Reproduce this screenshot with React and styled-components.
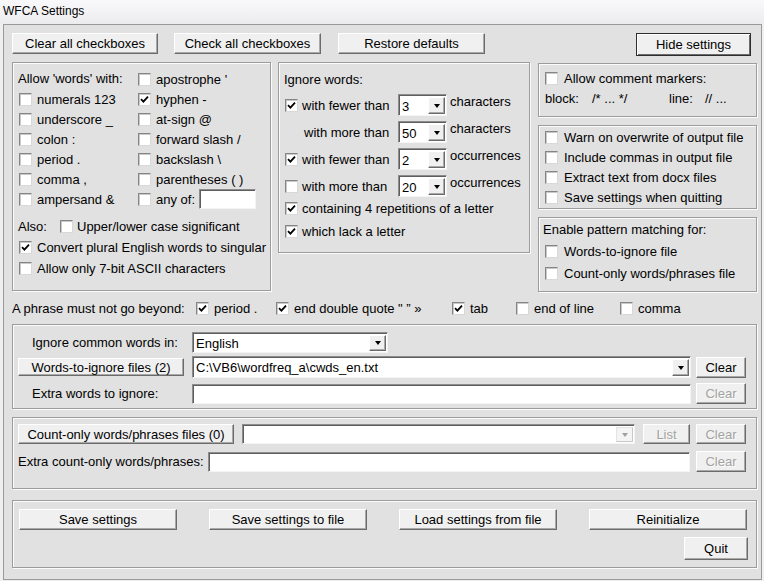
import React from "react";
import styled, { createGlobalStyle } from "styled-components";

const GlobalStyle = createGlobalStyle`
  html, body {
    margin: 0;
    padding: 0;
    background: #eeeef0;
  }
  body {
    font-family: "Liberation Sans", Arial, sans-serif;
    font-size: 13px;
    color: #000;
  }
  * {
    box-sizing: border-box;
  }
`;

const Window = styled.div`
  width: 764px;
  height: 581px;
  display: flex;
  flex-direction: column;
  background: #efeff1;
`;

const TitleBar = styled.div`
  height: 24px;
  padding: 4px 0 0 3px;
  font-size: 12px;
  line-height: 15px;
  background: linear-gradient(#f9f9fb, #ececef);
`;

const Frame = styled.div`
  margin: 0 2px 1px 3px;
  height: 556px;
  border: 1px solid #9a9a9a;
  background: #e1e1e1;
  padding: 8px 4px 0 8px;
  display: flex;
  flex-direction: column;
`;

const TopRow = styled.div`
  display: flex;
  align-items: flex-start;
  height: 23px;
  margin-bottom: 6px;
`;

const Button = styled.button`
  width: ${(p) => p.$w}px;
  height: ${(p) => p.$h || 21}px;
  margin-left: ${(p) => (p.$ml === "auto" ? "auto" : `${p.$ml || 0}px`)};
  margin-right: ${(p) => p.$mr || 0}px;
  flex: none;
  padding: 0;
  font-family: inherit;
  font-size: 13px;
  color: ${(p) => (p.disabled ? "#a3a3a3" : "#000")};
  text-shadow: ${(p) => (p.disabled ? "1px 1px 0 #fafafa" : "none")};
  background: #f0f0f0;
  border-style: solid;
  border-width: 1px;
  border-color: ${(p) =>
    p.$default ? "#2e2e2e" : "#ffffff #6b6b6b #6b6b6b #ffffff"};
  box-shadow: ${(p) =>
    p.$default
      ? "inset 1px 1px 0 #ffffff, inset -1px -1px 0 #6b6b6b"
      : "inset -1px -1px 0 #a9a9a9"};
  cursor: default;
`;

const Main = styled.div`
  display: flex;
  align-items: flex-start;
`;

const Group = styled.div`
  width: ${(p) => p.$w}px;
  height: ${(p) => p.$h}px;
  margin-top: ${(p) => p.$mt || 0}px;
  margin-left: ${(p) => p.$ml || 0}px;
  padding: ${(p) => p.$pad || "0"};
  border: 1px solid #9c9c9c;
  box-shadow: inset 1px 1px 0 #fbfbfb, 1px 1px 0 #fbfbfb;
  flex: none;
`;

const Column = styled.div`
  display: flex;
  flex-direction: column;
  margin-left: ${(p) => p.$ml || 0}px;
`;

const CharGrid = styled.div`
  display: grid;
  grid-template-columns: 119px 1fr;
  grid-auto-rows: 20px;
`;

const Text = styled.span`
  display: inline-flex;
  align-items: center;
  width: ${(p) => (p.$w ? `${p.$w}px` : "auto")};
  margin-left: ${(p) => p.$ml || 0}px;
  padding-left: ${(p) => p.$pl || 0}px;
  white-space: nowrap;
  flex: none;
`;

const Heading = styled.div`
  line-height: 16px;
  margin-left: ${(p) => p.$ml || 0}px;
  margin-bottom: ${(p) => p.$mb || 0}px;
  white-space: nowrap;
`;

const Row = styled.div`
  display: flex;
  align-items: center;
  height: ${(p) => p.$h || 20}px;
  margin-top: ${(p) => p.$mt || 0}px;
  white-space: nowrap;
`;

const CheckLabel = styled.label`
  display: flex;
  align-items: center;
  gap: ${(p) => p.$gap || 5}px;
  height: ${(p) => p.$h || 20}px;
  width: ${(p) => (p.$w ? `${p.$w}px` : "auto")};
  margin-left: ${(p) => p.$ml || 0}px;
  margin-top: ${(p) => p.$mt || 0}px;
  white-space: nowrap;
  flex: none;
`;

const Box = styled.span`
  width: 13px;
  height: 13px;
  flex: none;
  background: #fff;
  border: 1px solid;
  border-color: #858585 #d8d8d8 #d8d8d8 #858585;
  box-shadow: inset 1px 1px 0 #c9c9c9;
  display: flex;
  align-items: center;
  justify-content: center;
`;

const Check = ({ on, children, ...rest }) => (
  <CheckLabel {...rest}>
    <Box>
      {on && (
        <svg width="9" height="9" viewBox="0 0 9 9">
          <path d="M1 4.2 L3.4 6.6 L8 1.6" fill="none" stroke="#000" strokeWidth="1.8" />
        </svg>
      )}
    </Box>
    {children != null && <span>{children}</span>}
  </CheckLabel>
);

const Field = styled.div`
  width: ${(p) => p.$w}px;
  height: ${(p) => p.$h || 20}px;
  margin-left: ${(p) => p.$ml || 0}px;
  flex: none;
  display: flex;
  align-items: center;
  justify-content: space-between;
  padding-left: 3px;
  background: #fff;
  border: 1px solid;
  border-color: #8c8c8c #f4f4f4 #f4f4f4 #8c8c8c;
  box-shadow: inset 1px 1px 0 #5e5e5e;
  white-space: nowrap;
  overflow: hidden;
`;

const FieldText = styled.span`
  padding-top: ${(p) => p.$pt || 0}px;
`;

const DropButton = styled.span`
  width: 17px;
  align-self: stretch;
  margin: 2px 1px 1px 0;
  flex: none;
  display: flex;
  align-items: center;
  justify-content: center;
  background: ${(p) => (p.$off ? "#f4f4f4" : "#f0f0f0")};
  border: 1px solid;
  border-color: ${(p) =>
    p.$off ? "#e4e4e4 #c8c8c8 #c8c8c8 #e4e4e4" : "#ffffff #6b6b6b #6b6b6b #ffffff"};
  box-shadow: ${(p) => (p.$off ? "none" : "inset -1px -1px 0 #a9a9a9")};

  &::after {
    content: "";
    border-left: 3.5px solid transparent;
    border-right: 3.5px solid transparent;
    border-top: 4px solid ${(p) => (p.$off ? "#a0a0a0" : "#000")};
  }
`;

const Combo = ({ value, off, pt, ...rest }) => (
  <Field {...rest}>
    <FieldText $pt={pt}>{value}</FieldText>
    <DropButton $off={off} />
  </Field>
);

const SizeRow = styled.div`
  display: flex;
  align-items: flex-start;
  height: 22px;
  margin-bottom: 5px;
`;

const LabelCell = styled.div`
  width: 113px;
  height: 22px;
  display: flex;
  align-items: center;
  padding-left: ${(p) => p.$pl || 0}px;
  flex: none;
`;

const Unit = styled.span`
  margin-left: 3px;
  line-height: 16px;
`;

const FileRow = styled.div`
  display: flex;
  align-items: center;
  height: ${(p) => p.$h}px;
  margin-top: ${(p) => p.$mt || 0}px;
`;

const Cell = styled.div`
  width: ${(p) => p.$w}px;
  flex: none;
  display: flex;
  align-items: center;
  padding-left: ${(p) => p.$pl || 0}px;
  white-space: nowrap;
`;

const ButtonBar = styled.div`
  display: flex;
  gap: 32px;
`;

const QuitRow = styled.div`
  display: flex;
  justify-content: flex-end;
  margin-top: 7px;
`;

const sizes = [
  { on: true, label: "with fewer than", value: "3", unit: "characters" },
  { on: null, label: "with more than", value: "50", unit: "characters" },
  { on: true, label: "with fewer than", value: "2", unit: "occurrences" },
  { on: false, label: "with more than", value: "20", unit: "occurrences" },
];

const phraseStops = [
  { label: "period .", on: true, w: 80 },
  { label: "end double quote \" \u201D \u00BB", on: true, w: 176 },
  { label: "tab", on: true, w: 64 },
  { label: "end of line", on: false, w: 104 },
  { label: "comma", on: false },
];

export default function App() {
  return (
    <Window>
      <GlobalStyle />
      <TitleBar>WFCA Settings</TitleBar>
      <Frame>
        <TopRow>
          <Button $w={146}>Clear all checkboxes</Button>
          <Button $w={147} $ml={16}>Check all checkboxes</Button>
          <Button $w={147} $ml={17}>Restore defaults</Button>
          <Button $w={115} $h={23} $ml="auto" $mr={6} $default>
            Hide settings
          </Button>
        </TopRow>

        <Main>
          <Group $w={259} $h={229} $pad="6px 0 0 6px">
            <CharGrid>
              <Heading $ml={-1} style={{ lineHeight: "20px" }}>Allow 'words' with:</Heading>
              <Check>apostrophe '</Check>
              <Check>numerals 123</Check>
              <Check on>hyphen -</Check>
              <Check>underscore _</Check>
              <Check>at-sign @</Check>
              <Check>colon :</Check>
              <Check>forward slash /</Check>
              <Check>period .</Check>
              <Check>backslash \</Check>
              <Check>comma ,</Check>
              <Check>parentheses ( )</Check>
              <Check>ampersand &amp;</Check>
              <Row>
                <Check>any of:</Check>
                <Field $w={57} $h={20} $ml={4} />
              </Row>
            </CharGrid>
            <Row $mt={7}>
              <Text $w={42} $ml={-1}>Also:</Text>
              <Check $gap={4}>Upper/lower case significant</Check>
            </Row>
            <Check on $mt={1}>Convert plural English words to singular</Check>
            <Check $mt={1}>Allow only 7-bit ASCII characters</Check>
          </Group>

          <Group $w={252} $h={191} $ml={7} $pad="9px 0 0 6px">
            <Heading $ml={-1} $mb={6}>Ignore words:</Heading>
            {sizes.map((s, i) => (
              <SizeRow key={i}>
                <LabelCell $pl={s.on === null ? 19 : 0}>
                  {s.on === null ? s.label : <Check on={s.on} $gap={4}>{s.label}</Check>}
                </LabelCell>
                <Combo $w={49} $h={22} value={s.value} pt={2} />
                <Unit>{s.unit}</Unit>
              </SizeRow>
            ))}
            <Check on $gap={4} $h={23} $mt={-5}>containing 4 repetitions of a letter</Check>
            <Check on $gap={4} $h={23}>which lack a letter</Check>
          </Group>

          <Column $ml={8}>
            <Group $w={219} $h={54} $mt={1} $pad="4px 0 0 6px">
              <Check $gap={6}>Allow comment markers:</Check>
              <Row>
                <Text $w={47}>block:</Text>
                <Text $w={77}>/* ... */</Text>
                <Text $w={36}>line:</Text>
                <Text>// ...</Text>
              </Row>
            </Group>
            <Group $w={219} $h={84} $mt={8} $pad="1px 0 0 6px">
              <Check $gap={6}>Warn on overwrite of output file</Check>
              <Check $gap={6}>Include commas in output file</Check>
              <Check $gap={6}>Extract text from docx files</Check>
              <Check $gap={6}>Save settings when quitting</Check>
            </Group>
            <Group $w={219} $h={75} $mt={8} $pad="4px 0 0 6px">
              <Heading $ml={-2} $mb={3}>Enable pattern matching for:</Heading>
              <Check $gap={6} $h={21}>Words-to-ignore file</Check>
              <Check $gap={6} $h={21} $mt={1}>Count-only words/phrases file</Check>
            </Group>
          </Column>
        </Main>

        <Row $mt={6} $h={20}>
          <Text $w={184}>A phrase must not go beyond:</Text>
          {phraseStops.map((p) => (
            <Check key={p.label} on={p.on} $w={p.w}>
              {p.label}
            </Check>
          ))}
        </Row>

        <Group $w={745} $h={85} $mt={6} $pad="7px 0 0 5px">
          <FileRow $h={21}>
            <Cell $w={174} $pl={14}>Ignore common words in:</Cell>
            <Combo $w={196} $h={21} value="English" pt={1} />
          </FileRow>
          <FileRow $h={22} $mt={3}>
            <Cell $w={174}>
              <Button $w={166} $h={18}>Words-to-ignore files (2)</Button>
            </Cell>
            <Combo $w={499} $h={22} value="C:\VB6\wordfreq_a\cwds_en.txt" />
            <Button $w={50} $ml={5}>Clear</Button>
          </FileRow>
          <FileRow $h={21} $mt={5}>
            <Cell $w={174} $pl={14}>Extra words to ignore:</Cell>
            <Field $w={499} $h={20} />
            <Button $w={50} $ml={5} disabled>Clear</Button>
          </FileRow>
        </Group>

        <Group $w={745} $h={72} $mt={8} $pad="6px 0 0 5px">
          <FileRow $h={20}>
            <Button $w={216} $h={20}>Count-only words/phrases files (0)</Button>
            <Combo $w={393} $h={20} $ml={8} value="" off />
            <Button $w={47} $h={20} $ml={8} disabled>List</Button>
            <Button $w={50} $h={20} $ml={6} disabled>Clear</Button>
          </FileRow>
          <FileRow $h={21} $mt={7}>
            <Cell $w={190}>Extra count-only words/phrases:</Cell>
            <Field $w={482} $h={20} />
            <Button $w={50} $ml={6} disabled>Clear</Button>
          </FileRow>
        </Group>

        <Group $w={745} $h={68} $mt={11} $pad="8px 8px 0 6px">
          <ButtonBar>
            <Button $w={158}>Save settings</Button>
            <Button $w={158}>Save settings to file</Button>
            <Button $w={158}>Load settings from file</Button>
            <Button $w={158}>Reinitialize</Button>
          </ButtonBar>
          <QuitRow>
            <Button $w={64} $h={23}>Quit</Button>
          </QuitRow>
        </Group>
      </Frame>
    </Window>
  );
}
